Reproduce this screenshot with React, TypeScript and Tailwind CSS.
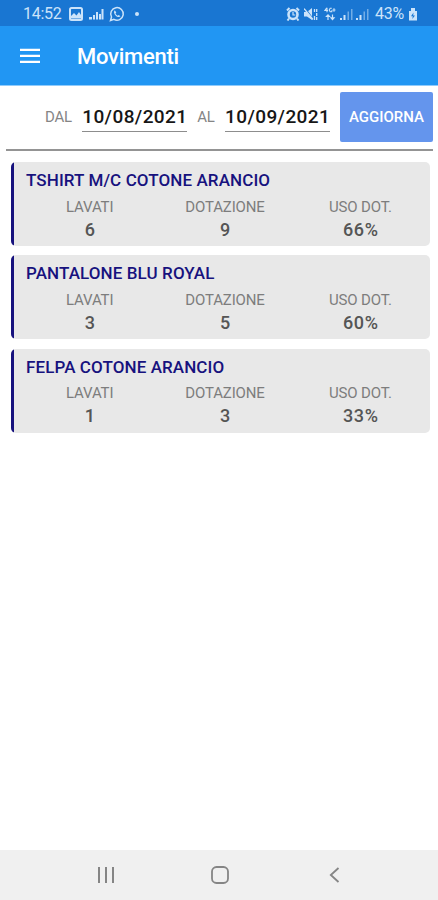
import type { ReactNode } from 'react';

const items = [
  { name: 'TSHIRT M/C COTONE ARANCIO', washed: '6', supplied: '9', usage: '66%' },
  { name: 'PANTALONE BLU ROYAL', washed: '3', supplied: '5', usage: '60%' },
  { name: 'FELPA COTONE ARANCIO', washed: '1', supplied: '3', usage: '33%' },
];

function Signal() {
  return (
    <svg width="13" height="14" viewBox="0 0 13 14" fill="currentColor">
      <path d="M0 11h2v2H0zM3.500 8h2v5h-2z" />
      <path d="M7.500 4.500H9V13H7.500zM11 2h1.500v11H11z" opacity="0.5" />
    </svg>
  );
}

function StatusBar() {
  return (
    <div className="flex h-[26px] shrink-0 items-center bg-[#1976d2] pt-[2px] pl-[23px] text-[#cbe3fa]">
      <span className="w-[46px] text-[16px] leading-none tracking-[-0.3px]">14:52</span>
      <svg className="shrink-0" width="14" height="14" viewBox="0 0 14 14" fill="none" stroke="currentColor">
        <rect x="1" y="1" width="12" height="12" rx="1.500" strokeWidth="2" />
        <path d="M2 11.500V9l3-3 2.500 2.500L10 5l2 3v3.500z" fill="currentColor" stroke="none" />
      </svg>
      <svg className="ml-[6px] shrink-0" width="15" height="14" viewBox="0 0 15 14" fill="currentColor">
        <path d="M0 10h3v2.500H0zM4 8h2v4.500H4zM7 5h2v7.500H7zM10 7h2v5.500h-2zM12.500 2h2v10.500h-2z" />
      </svg>
      <svg className="ml-[5px] shrink-0" width="16" height="16" viewBox="0 0 16 16" fill="none" stroke="currentColor">
        <path d="M1.500 14.500l1-3.500a6.300 6.300 0 1 1 2.400 2.400z" strokeWidth="1.500" />
        <path d="M5.800 4.300c-1.600 1.400-.6 3.700.8 5.100 1.500 1.500 3.600 2.300 4.900.8l-1.800-1.300-1 .8c-1-.4-1.800-1.200-2.200-2.200l.8-.9z" fill="currentColor" stroke="none" />
      </svg>
      <span className="ml-[10px] h-1 w-1 rounded-full bg-current" />
      <svg className="ml-[147px] shrink-0" width="14" height="14" viewBox="0 0 14 14" fill="none" stroke="currentColor">
        <circle cx="7" cy="7.500" r="4.500" strokeWidth="2.600" />
        <path d="M1 3.500L3.500 1M10.500 1L13 3.500M3 11.500l-1.500 2M11 11.500l1.500 2" strokeWidth="2" />
        <path d="M7 5v3h2.300" strokeWidth="1.200" />
      </svg>
      <svg className="ml-[4px] shrink-0" width="14" height="14" viewBox="0 0 14 14" fill="currentColor">
        <path d="M0 5h3l5-4v12L3 9.500H0z" />
        <path d="M1 1l9 12" stroke="#1976d2" strokeWidth="1.200" />
        <path d="M0 1.500l9 11" stroke="currentColor" strokeWidth="1.200" />
        <path d="M10.500 2v3M10.500 9v4M12.700 2v3M12.700 6v3M12.700 10v3" fill="none" stroke="currentColor" strokeWidth="1.300" />
      </svg>
      <svg className="ml-[6px] shrink-0" width="12" height="14" viewBox="0 0 12 14" fill="none" stroke="currentColor">
        <path d="M2.800 .8L.8 3.500H4M3 .8v4.500M7.800 1.300H6.200L5.200 3l1 1.800H7.800V3.200M10 1.300v3.500M8.500 3h3" strokeWidth="1.100" />
        <path d="M4 8v5M2.500 9.500L4 7.800l1.500 1.700zM8.500 7.500v5M7 10.800l1.500 1.700 1.500-1.700z" strokeWidth="1.200" />
      </svg>
      <span className="ml-[4px] flex gap-[3px]">
        <Signal />
        <Signal />
      </span>
      <span className="ml-[6px] w-[30px] text-[16px] leading-none tracking-[-0.3px]">43%</span>
      <svg className="ml-[3px] shrink-0" width="10" height="14" viewBox="0 0 10 14">
        <path d="M3 1h4v3h2v9.500H1V4h2z" fill="currentColor" />
        <path d="M5.500 5.500L3 9.200h1.800L4.300 12 7 8.400H5.200z" fill="#1976d2" />
      </svg>
    </div>
  );
}

function DateField({ children }: { children: ReactNode }) {
  return (
    <div className="h-[28px] w-[105px] border-b border-[#8d8d8d] text-center text-[19px] leading-[25px] font-medium tracking-[0.4px] whitespace-nowrap text-[#161616]">
      {children}
    </div>
  );
}

function Stat({ label, value }: { label: string; value: string }) {
  return (
    <div className="flex-1 text-center">
      <div className="text-[15px] leading-[22px] tracking-[-0.15px] text-[#7d7d7d]">{label}</div>
      <div className="pl-px text-[18px] leading-[24px] font-medium tracking-[0.7px] text-[#555]">{value}</div>
    </div>
  );
}

export default function App() {
  return (
    <div className="flex h-[900px] w-[438px] flex-col overflow-hidden bg-white font-[Roboto,sans-serif]">
      <StatusBar />
      <header className="flex h-[60px] shrink-0 items-center border-b border-[#90cbfb] bg-[#2196f3] pl-[20px] text-white">
        <svg width="20" height="16" viewBox="0 0 20 16" fill="currentColor">
          <path d="M0 .8h20v2.200H0zM0 6.800h20V9H0zM0 12.800h20V15H0z" />
        </svg>
        <h1 className="ml-[37px] pt-[2px] text-[22px] font-medium tracking-[-0.25px]">Movimenti</h1>
      </header>

      <div className="mr-[5px] ml-[6px] flex h-[65px] shrink-0 items-start border-b-2 border-[#949494] pt-[6px] pl-[39px]">
        <span className="mt-[14px] w-[37px] text-[15px] leading-[22px] tracking-[-0.2px] text-[#858585]">DAL</span>
        <div className="mt-[12px] ml-[0.500px]">
          <DateField>10/08/2021</DateField>
        </div>
        <span className="mt-[14px] ml-[10px] w-[28px] text-[15px] leading-[22px] tracking-[-0.2px] text-[#858585]">AL</span>
        <div className="mt-[12px]">
          <DateField>10/09/2021</DateField>
        </div>
        <button className="ml-[10px] h-[50px] w-[93px] shrink-0 rounded-[2px] bg-[#6495ed] text-[15px] font-medium text-white">
          AGGIORNA
        </button>
      </div>

      <main className="flex flex-1 flex-col gap-[9.300px] pt-[11px] pr-[8px] pl-[10.500px]">
        {items.map((item) => (
          <section key={item.name} className="flex h-[84px] overflow-hidden rounded-[5px] bg-[#e8e8e8]">
            <div className="w-[3.500px] shrink-0 bg-[#17127e]" />
            <div className="pt-[6px] pl-[12px]">
              <h2 className="text-[17px] leading-[24px] font-medium tracking-[0.1px] whitespace-nowrap text-[#17127e]">{item.name}</h2>
              <div className="mt-[3.500px] -ml-[4px] flex w-[406px]">
                <Stat label="LAVATI" value={item.washed} />
                <Stat label="DOTAZIONE" value={item.supplied} />
                <Stat label="USO DOT." value={item.usage} />
              </div>
            </div>
          </section>
        ))}
      </main>

      <nav className="flex h-[50px] shrink-0 items-center bg-[#f0f0f0] pl-[98px] text-[#858585]">
        <svg width="16" height="16" viewBox="0 0 16 16" fill="currentColor">
          <path d="M0 0h2v16H0zM7 0h2v16H7zM14 0h2v16h-2z" />
        </svg>
        <svg className="ml-[97px]" width="18" height="18" viewBox="0 0 18 18" fill="none" stroke="currentColor" strokeWidth="1.800">
          <rect x="1" y="1" width="16" height="16" rx="4.500" />
        </svg>
        <svg className="ml-[100px]" width="11" height="16" viewBox="0 0 11 16" fill="none" stroke="currentColor" strokeWidth="1.800">
          <path d="M9.500 1L1.800 8l7.700 7" />
        </svg>
      </nav>
    </div>
  );
}
